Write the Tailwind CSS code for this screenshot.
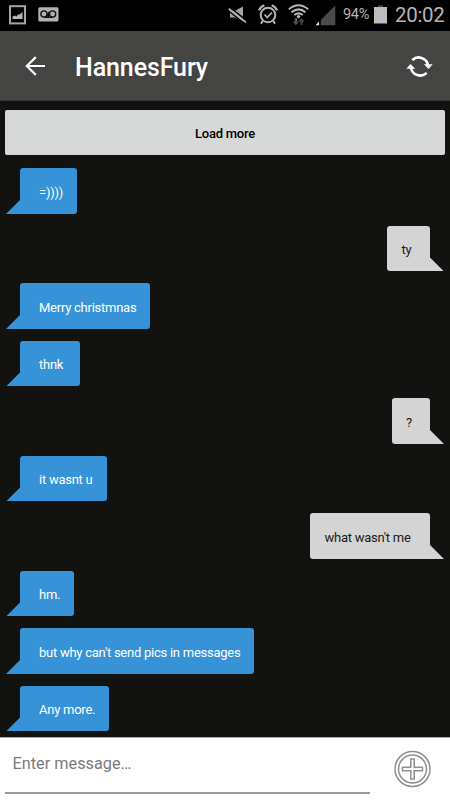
<!DOCTYPE html>
<html lang="en">
  <head>
    <meta charset="UTF-8" />
    <meta name="viewport" content="width=device-width, initial-scale=1.0" />
    <title>HannesFury</title>
    <script src="https://cdn.jsdelivr.net/npm/@tailwindcss/browser@4"></script>
  </head>
  <body class="bg-[#121210] font-['Roboto',sans-serif]">
    <div class="flex flex-col w-[450px] h-[800px] overflow-hidden">
      <!-- Status bar -->
      <div class="flex shrink-0 items-center h-[31px] bg-black text-[#b5b5b5]">
        <svg class="ml-[9px] mb-[2px] w-[17px] h-[20px]" viewBox="0 0 17 20">
          <rect x="1" y="1.2" width="15" height="17.2" fill="none" stroke="#a5a5a5" stroke-width="2" />
          <path d="M3.5 14V11.5L6 10.5L7.5 11.5L9 9.5L10.5 9.5L13.5 7V14Z" fill="#b5b5b5" />
        </svg>
        <svg class="ml-[11.5px] mb-[2px] w-[21px] h-[15px]" viewBox="0 0 21 15">
          <rect x=".3" y=".3" width="20.2" height="14.2" rx="1.5" fill="#b2b2b2" />
          <g fill="none" stroke="#111" stroke-width="1.4">
            <circle cx="6" cy="7" r="3.1" />
            <circle cx="14.6" cy="7" r="3.1" />
            <path d="M6 10.2H14.6M8.5 9.5L10.3 6.5V10" />
          </g>
        </svg>
        <svg class="ml-auto mb-[2px] w-[19px] h-[18px]" viewBox="0 0 19 18">
          <path d="M2 5H6.5L15 .5V15.5L6.5 11.5H2Z" fill="#a5a5a5" />
          <path d="M1.8 1.2L18.5 14.6" stroke="#000" stroke-width="1.6" />
          <path d="M.2 4.6L17 18" stroke="#000" stroke-width="1.4" />
          <path d="M.8 2.8L18 16.4" stroke="#b5b5b5" stroke-width="1.8" />
        </svg>
        <svg class="ml-[11px] mb-[2px] w-[20px] h-[21px]" viewBox="0 0 20 21" fill="none" stroke="#b5b5b5">
          <circle cx="10" cy="11" r="7.3" stroke-width="2" />
          <path d="M6.5 10.5L9.2 13.5L14 8.5" stroke-width="1.7" />
          <path d="M1 6.3A9 9 0 0 1 6.3 1.3M13.7 1.3A9 9 0 0 1 19 6.3" stroke-width="2.2" />
          <path d="M4.7 17L3 19.8M15.3 17L17 19.8" stroke-width="2" />
        </svg>
        <svg class="ml-[10.5px] mb-[2px] w-[21px] h-[22px]" viewBox="0 0 21 22">
          <g fill="none" stroke="#b5b5b5" stroke-width="2">
            <path d="M.8 5.2Q10.5 -2.8 20.2 5.2" />
            <path d="M3.5 8.3Q10.5 2.5 17.5 8.3" />
            <path d="M6.3 11.1Q10.5 7.6 14.7 11.1" />
          </g>
          <circle cx="10.5" cy="12.6" r="1.7" fill="#b5b5b5" />
          <path d="M6.8 14H9V17.5H11L7.9 21.3L4.8 17.5H6.8Z" fill="#555" />
          <path d="M12.5 21V17.5H10.5L13.5 14L16.6 17.5H14.5V21Z" fill="#4a4a4a" />
        </svg>
        <svg class="ml-[6px] mb-[1px] w-[21px] h-[21px]" viewBox="0 0 21 21">
          <path d="M20.3 .5V20.3H.5Z" fill="#4b4b4b" />
          <path d="M4.2 15.8L5.8 14.2V20.8H4.2Z" fill="#000" />
          <path d="M4 16.5V20.3H.5Z" fill="#ddd" />
        </svg>
        <span class="ml-[7px] mb-[1px] w-[27px] text-[14.5px] tracking-[-0.3px] whitespace-nowrap">94%</span>
        <svg class="ml-[4px] mb-[2px] w-[13px] h-[19px]" viewBox="0 0 13 19">
          <path d="M4 .3H9V2H4Z" fill="#444" />
          <path d="M0 2H13V18.5H0Z" fill="#bdbdbd" />
        </svg>
        <span class="ml-[8px] mb-[1px] w-[55px] text-[20.5px] tracking-[-0.3px] whitespace-nowrap">20:02</span>
      </div>

      <!-- Toolbar -->
      <div class="flex shrink-0 items-center h-[70px] bg-[#444442] border-b border-[#353533] text-white">
        <svg class="ml-[25px] mt-[1px] w-[21px] h-[20px]" viewBox="0 0 21 20" fill="none" stroke="#fff" stroke-width="2.2">
          <path d="M20 10H2M10.8 1.1L1.8 10L10.8 18.9" />
        </svg>
        <h1 class="ml-[29px] mt-[4px] text-[25px] font-medium leading-[30px] tracking-[-0.1px]">HannesFury</h1>
        <svg class="ml-auto mr-[17px] mt-[1px] w-[27px] h-[23px]" viewBox="0 0 27 23">
          <g fill="none" stroke="#fff" stroke-width="2.6">
            <path d="M6.3 5.2A9.3 9.3 0 0 1 22 10" />
            <path d="M20.7 17.8A9.3 9.3 0 0 1 5 13" />
          </g>
          <path d="M17.8 9.2H26.6L22.6 14Z" fill="#fff" />
          <path d="M.4 13.8H9.2L4.4 9Z" fill="#fff" />
        </svg>
      </div>

      <!-- Messages -->
      <div class="flex flex-col grow items-start gap-3 pt-[9px] text-[13px] leading-[15px] tracking-[-0.25px]">
        <button class="mx-[5px] mb-[1.4px] w-[440px] h-[45px] shrink-0 rounded-[2px] bg-[#d6d8d7] pt-[1px] font-medium text-black">Load more</button>

        <div class="flex h-[45.5px] shrink-0 items-end pl-[6px]">
          <div class="w-[15px] h-[15px] -mr-px bg-[#3693d7] [clip-path:polygon(100%_0,100%_100%,0_100%)]"></div>
          <div class="flex h-full items-center w-[57px] pl-[19px] pt-[2px] rounded-[3px] rounded-bl-none bg-[#3693d7] text-white">=))))</div>
        </div>
        <div class="flex h-[45.5px] shrink-0 items-end self-end pr-[6px]">
          <div class="flex h-full items-center w-[43px] pl-[14.5px] pt-[2px] rounded-[3px] rounded-br-none bg-[#d4d4d4] text-[#1a1a1a]">ty</div>
          <div class="w-[15px] h-[15px] -ml-px bg-[#d4d4d4] [clip-path:polygon(0_0,100%_100%,0_100%)]"></div>
        </div>
        <div class="flex h-[45.5px] shrink-0 items-end pl-[6px]">
          <div class="w-[15px] h-[15px] -mr-px bg-[#3693d7] [clip-path:polygon(100%_0,100%_100%,0_100%)]"></div>
          <div class="flex h-full items-center w-[130px] pl-[19px] pt-[2px] rounded-[3px] rounded-bl-none bg-[#3693d7] text-white whitespace-nowrap">Merry christmnas</div>
        </div>
        <div class="flex h-[45.5px] shrink-0 items-end pl-[6px]">
          <div class="w-[15px] h-[15px] -mr-px bg-[#3693d7] [clip-path:polygon(100%_0,100%_100%,0_100%)]"></div>
          <div class="flex h-full items-center w-[60px] pl-[19px] pt-[2px] rounded-[3px] rounded-bl-none bg-[#3693d7] text-white">thnk</div>
        </div>
        <div class="flex h-[45.5px] shrink-0 items-end self-end pr-[6px]">
          <div class="flex h-full items-center w-[38.5px] pl-[14.5px] pt-[2px] rounded-[3px] rounded-br-none bg-[#d4d4d4] text-[#1a1a1a]">?</div>
          <div class="w-[15px] h-[15px] -ml-px bg-[#d4d4d4] [clip-path:polygon(0_0,100%_100%,0_100%)]"></div>
        </div>
        <div class="flex h-[45.5px] shrink-0 items-end pl-[6px]">
          <div class="w-[15px] h-[15px] -mr-px bg-[#3693d7] [clip-path:polygon(100%_0,100%_100%,0_100%)]"></div>
          <div class="flex h-full items-center w-[87px] pl-[19px] pt-[2px] rounded-[3px] rounded-bl-none bg-[#3693d7] text-white whitespace-nowrap">it wasnt u</div>
        </div>
        <div class="flex h-[45.5px] shrink-0 items-end self-end pr-[6px]">
          <div class="flex h-full items-center w-[120px] pl-[14.5px] pt-[2px] rounded-[3px] rounded-br-none bg-[#d4d4d4] text-[#1a1a1a] whitespace-nowrap">what wasn't me</div>
          <div class="w-[15px] h-[15px] -ml-px bg-[#d4d4d4] [clip-path:polygon(0_0,100%_100%,0_100%)]"></div>
        </div>
        <div class="flex h-[45.5px] shrink-0 items-end pl-[6px]">
          <div class="w-[15px] h-[15px] -mr-px bg-[#3693d7] [clip-path:polygon(100%_0,100%_100%,0_100%)]"></div>
          <div class="flex h-full items-center w-[54px] pl-[19px] pt-[2px] rounded-[3px] rounded-bl-none bg-[#3693d7] text-white">hm.</div>
        </div>
        <div class="flex h-[45.5px] shrink-0 items-end pl-[6px]">
          <div class="w-[15px] h-[15px] -mr-px bg-[#3693d7] [clip-path:polygon(100%_0,100%_100%,0_100%)]"></div>
          <div class="flex h-full items-center w-[234px] pl-[19px] pt-[2px] rounded-[3px] rounded-bl-none bg-[#3693d7] text-white whitespace-nowrap">but why can't send pics in messages</div>
        </div>
        <div class="flex h-[45.5px] shrink-0 items-end pl-[6px]">
          <div class="w-[15px] h-[15px] -mr-px bg-[#3693d7] [clip-path:polygon(100%_0,100%_100%,0_100%)]"></div>
          <div class="flex h-full items-center w-[89px] pl-[19px] pt-[2px] rounded-[3px] rounded-bl-none bg-[#3693d7] text-white whitespace-nowrap">Any more.</div>
        </div>
      </div>

      <!-- Message input -->
      <div class="flex shrink-0 h-[63px] bg-white border-t border-[#aaa]">
        <div class="ml-[5px] w-[365px] h-[56px] pl-[7.5px] pt-[16px] border-b-2 border-[#9b9b9b] text-[16.3px] leading-5 text-[#7b7b7b]">Enter message…</div>
        <svg class="ml-[23.5px] mt-[12px] w-[38px] h-[38px]" viewBox="0 0 38 38" fill="none" stroke="#909090" stroke-width="1.5">
          <circle cx="18.5" cy="19" r="17.5" />
          <circle cx="18.5" cy="19" r="14" />
          <path d="M16.8 9H20.2V17.3H28.5V20.7H20.2V29H16.8V20.7H8.5V17.3H16.8Z" />
        </svg>
      </div>
    </div>
  </body>
</html>
